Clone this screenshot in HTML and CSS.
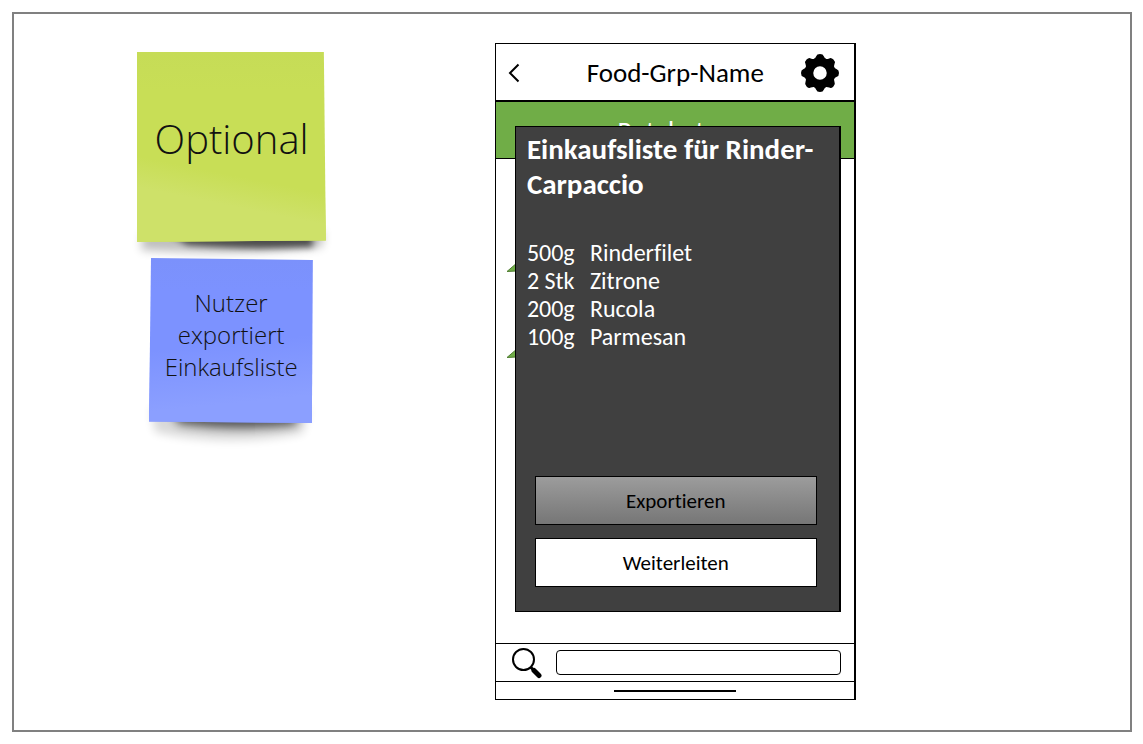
FILE: index.html
```html
<!DOCTYPE html>
<html lang="de">
<head>
<meta charset="utf-8">
<meta name="viewport" content="width=device-width, initial-scale=1">
<title>Einkaufsliste exportieren</title>
<link rel="stylesheet" href="styles.css">
</head>
<body>
<main class="board">
  <section class="notes">
    <div class="note note-green">
      <svg class="paper" viewBox="0 0 189 190" preserveAspectRatio="none" aria-hidden="true">
        <defs>
          <filter id="soft" x="-20%" y="-100%" width="140%" height="300%"><feGaussianBlur stdDeviation="5"/></filter>
          <filter id="tight" x="-20%" y="-100%" width="140%" height="300%"><feGaussianBlur stdDeviation="3"/></filter>
          <linearGradient id="green" x1="0" y1="0" x2="0" y2="1">
            <stop offset="0" stop-color="#c6dc57"/><stop offset=".2" stop-color="#c8de56"/>
          </linearGradient>
          <linearGradient id="greenFold" gradientUnits="userSpaceOnUse" x1="90" y1="122" x2="84" y2="152">
            <stop offset="0" stop-color="#cee169" stop-opacity="0"/><stop offset="1" stop-color="#cee169"/>
          </linearGradient>
        </defs>
        <path d="M6 180H187L185 195Q110 204 4 198Z" fill="#000" opacity=".25" filter="url(#soft)"/>
        <path d="M30 180H175L176 195Q110 198 50 193Z" fill="#000" opacity=".6" filter="url(#tight)"/>
        <path d="M0 0H187L189 188.500L0 190Z" fill="url(#green)"/>
        <path d="M0 100L188.500 135L189 188.500L0 190Z" fill="url(#greenFold)"/>
      </svg>
      <p class="note-text">Optional</p>
    </div>
    <div class="note note-blue">
      <svg class="paper" viewBox="0 0 164 165" preserveAspectRatio="none" aria-hidden="true">
        <defs>
          <linearGradient id="blue" x1="0" y1="0" x2="0" y2="1">
            <stop offset="0" stop-color="#7b91fb"/><stop offset=".2" stop-color="#7c92ff"/>
          </linearGradient>
          <linearGradient id="blueFold" gradientUnits="userSpaceOnUse" x1="80" y1="85" x2="86" y2="145">
            <stop offset="0" stop-color="#8b9fff" stop-opacity="0"/><stop offset="1" stop-color="#8b9fff"/>
          </linearGradient>
        </defs>
        <path d="M2 150H160L154 175Q80 190 6 174Z" fill="#000" opacity=".15" filter="url(#soft)"/>
        <path d="M20 150H152L146 167Q90 174 30 166Z" fill="#000" opacity=".6" filter="url(#soft)"/>
        <path d="M2 0L164 2L163 165L0 163.500Z" fill="url(#blue)"/>
        <path d="M1 80L163.500 60L163 165L0 163.500Z" fill="url(#blueFold)"/>
      </svg>
      <p class="note-text">Nutzer exportiert Einkaufsliste</p>
    </div>
  </section>

  <section class="phone">
    <header class="topbar">
      <button class="icon-button" type="button" aria-label="Zurück">
        <svg width="12" height="20" viewBox="0 0 12 20" aria-hidden="true"><path d="M10.500 1.500L2 10L10.500 18.500" fill="none" stroke="#000" stroke-width="2"/></svg>
      </button>
      <h1 class="title">Food-Grp-Name</h1>
      <button class="icon-button" type="button" aria-label="Einstellungen">
        <svg width="38" height="38" viewBox="-19 -19 38 38" aria-hidden="true">
          <circle r="11" fill="none" stroke="#000" stroke-width="8.500"/>
          <path id="tooth" d="M-6.500 -13.500Q-4.500 -15 -3.800 -16.800Q-3.200 -19 0 -19Q3.200 -19 3.800 -16.800Q4.500 -15 6.500 -13.500Z"/>
          <use href="#tooth" transform="rotate(45)"/><use href="#tooth" transform="rotate(90)"/><use href="#tooth" transform="rotate(135)"/><use href="#tooth" transform="rotate(180)"/><use href="#tooth" transform="rotate(225)"/><use href="#tooth" transform="rotate(270)"/><use href="#tooth" transform="rotate(315)"/>
        </svg>
      </button>
    </header>
    <div class="banner">Rotebeten</div>
    <div class="content">
      <svg class="leaf" width="24" height="20" viewBox="0 0 24 20" aria-hidden="true"><path d="M2 18.500L20 3V17.500Z" fill="#70ad47" stroke="#507e32"/></svg>
      <svg class="leaf" width="24" height="20" viewBox="0 0 24 20" aria-hidden="true"><path d="M2 18.500L20 3V17.500Z" fill="#70ad47" stroke="#507e32"/></svg>
    </div>
    <div class="searchbar">
      <svg width="32" height="32" viewBox="0 0 32 32" aria-hidden="true">
        <circle cx="12.500" cy="12.500" r="10.500" fill="#fff" stroke="#000" stroke-width="2"/>
        <path d="M19.500 20L23 23.500" stroke="#000" stroke-width="3"/><path d="M23 23.500L28 28.500" stroke="#000" stroke-width="5" stroke-linecap="round"/>
      </svg>
      <input class="search" type="search" aria-label="Suche">
    </div>
    <div class="homebar"><span class="handle"></span></div>

    <div class="dialog" role="dialog" aria-labelledby="dialog-title">
      <h2 class="dialog-title" id="dialog-title">Einkaufsliste für Rinder-Carpaccio</h2>
      <table class="items">
        <tr><td>500g</td><td>Rinderfilet</td></tr>
        <tr><td>2 Stk</td><td>Zitrone</td></tr>
        <tr><td>200g</td><td>Rucola</td></tr>
        <tr><td>100g</td><td>Parmesan</td></tr>
      </table>
      <div class="actions">
        <button class="action action-export" type="button">Exportieren</button>
        <button class="action" type="button">Weiterleiten</button>
      </div>
    </div>
  </section>
</main>
</body>
</html>
```

FILE: styles.css
```css
* { box-sizing: border-box; }

body {
  margin: 0;
  padding: 12px 11px 12px 12px;
  background: #fff;
  color: #000;
  font-family: Carlito, Lato, sans-serif;
  font-variant-ligatures: none;
}

h1, h2, p { margin: 0; }

button {
  font-family: inherit;
  font-variant-ligatures: inherit;
  color: inherit;
}

.board {
  display: grid;
  grid-template-columns: 189fr 361fr;
  column-gap: 23.500%;
  align-items: start;
  min-height: 720px;
  padding: 29px 24.500% 30px 11%;
  border: 2px solid #808080;
}

.notes {
  display: flex;
  flex-direction: column;
  gap: 16px;
  padding-top: 9px;
}

.note {
  position: relative;
  display: flex;
  align-items: center;
  justify-content: center;
  font-family: "Open Sans", sans-serif;
  font-weight: 300;
  color: #111;
  text-align: center;
}

.note-green { min-height: 190px; padding-bottom: 18px; font-size: 40px; }

.note-blue {
  min-height: 165px;
  margin: 0 13px 0 12px;
  padding: 0 8px 12px;
  font-size: 24px;
  line-height: 32px;
}

.paper {
  position: absolute;
  inset: 0;
  width: 100%;
  height: 100%;
  overflow: visible;
}

.note-text { position: relative; }

.phone {
  position: relative;
  display: flex;
  flex-direction: column;
  min-height: 657px;
  border: 2px solid #000;
  border-width: 1px 2px 1px 1px;
  background: #fff;
}

.topbar {
  display: flex;
  align-items: center;
  justify-content: space-between;
  height: 58px;
  padding: 2px 15px 0 12px;
  border-bottom: 2px solid #000;
}

.icon-button {
  display: flex;
  padding: 0;
  border: 0;
  background: none;
}

.title {
  padding-left: 30px;
  font-size: 27px;
  font-weight: 400;
  line-height: 32px;
}

.banner {
  height: 57px;
  padding-top: 15px;
  border-bottom: 1px solid #000;
  background: #70ad47;
  color: #fff;
  font-size: 27px;
  line-height: 28px;
  text-align: center;
}

.content {
  display: flex;
  flex: 1;
  flex-direction: column;
  gap: 66px;
  padding: 94px 0 0 9px;
}

.searchbar {
  display: flex;
  align-items: center;
  gap: 13px;
  height: 39px;
  padding: 0 13px 0 15px;
  border: solid #000;
  border-width: 1px 0;
}

.search {
  flex: 1;
  min-width: 0;
  height: 25px;
  border: 1px solid #000;
  border-radius: 4px;
  background: #fff;
}

.homebar {
  display: flex;
  justify-content: center;
  height: 17px;
  padding-top: 8px;
}

.handle { width: 34%; height: 2px; background: #000; }

.dialog {
  position: absolute;
  top: 82px;
  right: 13px;
  bottom: 87px;
  left: 19px;
  display: flex;
  flex-direction: column;
  padding: 5px 11px 24px;
  border: 1px solid #000;
  border-right-width: 2px;
  background: #404040;
  color: #fff;
}

.dialog-title { font-size: 29px; line-height: 35px; }

.items {
  margin-top: 37px;
  border-collapse: collapse;
  font-size: 24px;
  line-height: 28px;
}

.items td { padding: 0; }
.items td:first-child { width: 63px; }

.actions {
  display: flex;
  flex-direction: column;
  gap: 13px;
  margin-top: auto;
  padding: 0 11px 0 8px;
}

.action {
  height: 49px;
  border: 1px solid #000;
  background: #fff;
  color: #000;
  font-size: 21px;
}

.action-export { background: linear-gradient(#9c9c9c, #767676); }
```
